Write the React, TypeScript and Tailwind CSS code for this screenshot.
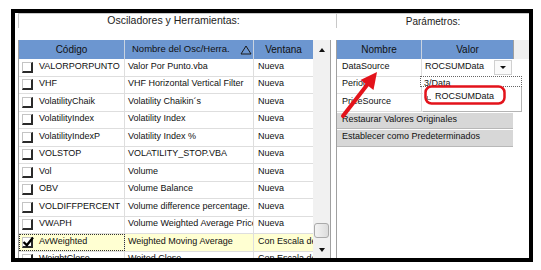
import React from "react";

type Row = { code: string; name: string; win: string; checked?: boolean };

const rows: Row[] = [
  { code: "VALORPORPUNTO", name: "Valor Por Punto.vba", win: "Nueva" },
  { code: "VHF", name: "VHF Horizontal Vertical Filter", win: "Nueva" },
  { code: "VolatilityChaik", name: "Volatility Chaikin´s", win: "Nueva" },
  { code: "VolatilityIndex", name: "Volatility Index", win: "Nueva" },
  { code: "VolatilityIndexP", name: "Volatility Index %", win: "Nueva" },
  { code: "VOLSTOP", name: "VOLATILITY_STOP.VBA", win: "Nueva" },
  { code: "Vol", name: "Volume", win: "Nueva" },
  { code: "OBV", name: "Volume Balance", win: "Nueva" },
  { code: "VOLDIFFPERCENT", name: "Volume difference percentage.", win: "Nueva" },
  { code: "VWAPH", name: "Volume Weighted Average Price", win: "Nueva" },
  { code: "AvWeighted", name: "Weighted Moving Average", win: "Con Escala de Precios", checked: true },
  { code: "WeightClose", name: "Weited Close", win: "Con Escala de Precios" },
];

function CheckBox({ on }: { on?: boolean }) {
  return (
    <span className="relative ml-[3px] w-[11px] h-[11px] shrink-0 bg-white border-t border-l border-[#c4c4c4] border-r-2 border-b-2 border-r-[#2a2a2a] border-b-[#2a2a2a]">
      {on && (
        <svg className="absolute left-[-1px] top-[-3px]" width="13" height="13" viewBox="0 0 13 13">
          <path d="M1.5 7 L4.8 10.2 L11 2.5" fill="none" stroke="#000" strokeWidth="2.3" />
        </svg>
      )}
    </span>
  );
}

export default function App() {
  return (
    <div className="relative w-[541px] h-[270px] bg-white pl-[11px] pt-[9px] font-['Liberation_Sans',Arial,sans-serif] text-[#111]">
      <div className="w-[522px] h-[253px] border-4 border-black overflow-hidden flex">
        {/* left panel */}
        <div className="w-[321px] flex flex-col">
          <div className="ml-[3px] h-[15px] shrink-0 border-l border-t border-[#c8c8c8] flex items-center justify-center pr-[8px] text-[10.5px] text-[#222]">
            Osciladores y Herramientas:
          </div>
          <div className="ml-[3px] mt-[12px] w-[313px] flex-1 flex border-l border-[#a0a0a0] min-h-0">
            <div className="w-[294px] flex flex-col overflow-hidden">
              <div className="h-[19px] shrink-0 flex bg-[#6c96d0] text-[10px] text-[#111]">
                <div className="w-[106px] border-r border-[#c9d3e0] flex items-center justify-center">Código</div>
                <div className="w-[129px] border-r border-[#c9d3e0] flex items-center pl-[7px] gap-[10px] whitespace-nowrap text-[9.5px]">
                  <span>Nombre del Osc/Herra.</span>
                  <svg width="12" height="10" viewBox="0 0 12 10" className="shrink-0">
                    <path d="M6 1 L11 9 L1 9 Z" fill="none" stroke="#1a1a1a" strokeWidth="1" />
                  </svg>
                </div>
                <div className="w-[59px] flex items-center justify-center">Ventana</div>
              </div>
              {rows.map((r) => (
                <div
                  key={r.code}
                  className={`h-[17.5px] shrink-0 flex border-b border-[#dedede] text-[9px] ${r.checked ? "bg-[#ffffd2]" : ""}`}
                >
                  <div
                    className={`w-[106px] shrink-0 flex items-center border-r border-[#dedede] ${r.checked ? "outline outline-1 outline-dotted outline-[#333] -outline-offset-1" : ""}`}
                  >
                    <CheckBox on={r.checked} />
                    <span className="ml-[6px] pb-[2px] whitespace-nowrap">{r.code}</span>
                  </div>
                  <div className="w-[129px] shrink-0 flex items-center border-r border-[#dedede] pl-[3px] overflow-hidden">
                    <span className="pb-[2px] whitespace-nowrap">{r.name}</span>
                  </div>
                  <div className="w-[59px] shrink-0 flex items-center pl-[4px] overflow-hidden">
                    <span className="pb-[2px] whitespace-nowrap">{r.win}</span>
                  </div>
                </div>
              ))}
            </div>
            {/* scrollbar */}
            <div className="w-[18px] flex flex-col bg-[#f1f1f1] border-r border-[#a0a0a0]">
              <div className="h-[19px] flex items-center justify-center">
                <span className="w-0 h-0 border-x-[3.5px] border-x-transparent border-b-[4px] border-b-[#111]" />
              </div>
              <div className="flex-1 flex flex-col justify-end">
                <div className="mx-[1px] mb-[3px] h-[15px] rounded-[3px] border border-[#a9a9a9] bg-gradient-to-r from-[#f4f4f4] to-[#dcdcdc]" />
              </div>
              <div className="h-[17px] flex items-center justify-center">
                <span className="w-0 h-0 border-x-[3.5px] border-x-transparent border-t-[4px] border-t-[#111]" />
              </div>
            </div>
          </div>
        </div>

        {/* right panel */}
        <div className="flex-1 flex flex-col">
          <div className="h-[15px] shrink-0 border-l border-t border-[#c8c8c8] flex items-center justify-center text-[10px] text-[#222]">
            Parámetros:
          </div>
          <div className="mt-[12px] flex-1 border-l border-[#a0a0a0] flex flex-col">
            <div className="h-[19px] shrink-0 flex text-[10px]">
              <div className="w-[85px] bg-[#6c96d0] border-r border-[#c9d3e0] flex items-center justify-center">Nombre</div>
              <div className="w-[91px] bg-[#6c96d0] flex items-center justify-center">Valor</div>
              <div className="flex-1 bg-[#f0f0f0] border-l border-[#a0a0a0]" />
            </div>
            <div className="w-[176px] text-[9px]">
              <div className="h-[17.5px] flex border-b border-[#dedede]">
                <div className="w-[85px] border-r border-[#dedede] flex items-center pl-[5px] pb-[2px]">DataSource</div>
                <div className="flex-1 flex items-center pl-[3px]">
                  <span className="pb-[2px]">ROCSUMData</span>
                  <span className="ml-auto mr-[1px] w-[18px] h-[15px] bg-[#fafafa] border border-[#d0d0d0] flex items-center justify-center">
                    <span className="w-0 h-0 border-x-[3px] border-x-transparent border-t-[3.5px] border-t-[#111]" />
                  </span>
                </div>
              </div>
              <div className="h-[17.5px] flex border-b border-[#dedede]">
                <div className="w-[85px] border-r border-[#dedede] flex items-center pl-[5px] pb-[2px]">Periodo</div>
                <div className="flex-1 flex items-center pl-[3px] pb-[2px]">3/Data</div>
              </div>
              <div className="h-[17.5px] flex border-b border-[#dedede]">
                <div className="w-[85px] border-r border-[#dedede] flex items-center pl-[5px] pb-[2px]">PriceSource</div>
                <div className="flex-1" />
              </div>
              <div className="h-[17.5px] flex items-center pl-[5px] pb-[2px] bg-[#d7d7d7] border-t border-white border-b border-b-[#b8b8b8]">
                Restaurar Valores Originales
              </div>
              <div className="h-[17.5px] flex items-center pl-[5px] pb-[2px] bg-[#d7d7d7] border-t border-white border-b border-b-[#b8b8b8]">
                Establecer como Predeterminados
              </div>
            </div>
          </div>
        </div>
      </div>

      {/* open editor + dropdown list over the Valor column */}
      <div className="absolute left-[420px] top-[76px] w-[102px] h-[11px] bg-white border border-dotted border-[#666] overflow-hidden text-[9px] leading-[12px] pl-[3px]">
        3/Data
      </div>
      <div className="absolute left-[423px] top-[87px] w-[99px] h-[25px] bg-white border-r border-b border-[#b4b4b4] text-[9px]">
        <span className="absolute left-[4px] top-[9px] w-[4px] h-[4px] border-l border-b border-[#888]" />
        <span className="absolute left-[12px] top-[3px] leading-[12px]">ROCSUMData</span>
      </div>

      {/* red annotations */}
      <svg className="absolute left-0 top-0 pointer-events-none" width="541" height="270" viewBox="0 0 541 270">
        <rect x="425.5" y="86.5" width="79" height="17" rx="6" fill="none" stroke="#e3131b" strokeWidth="2.5" />
        <line x1="343" y1="116" x2="367" y2="85" stroke="#e3131b" strokeWidth="4" strokeLinecap="round" />
        <path d="M377 72 L373.5 90 L360.5 80 Z" fill="#e3131b" />
      </svg>
    </div>
  );
}
